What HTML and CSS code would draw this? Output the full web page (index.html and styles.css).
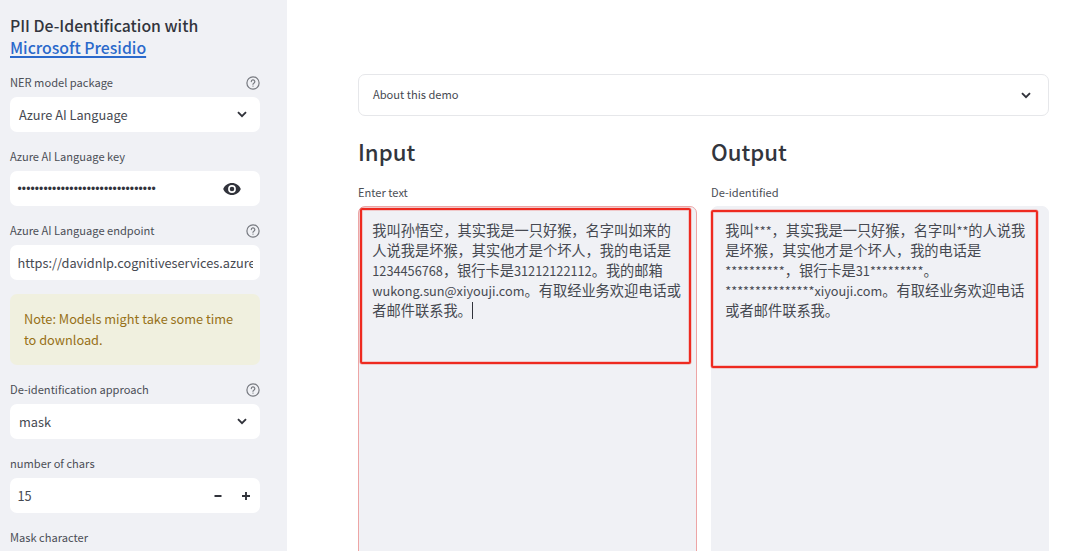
FILE: index.html
```html
<!DOCTYPE html>
<html lang="zh-CN">
<head>
<meta charset="utf-8">
<title>PII De-Identification</title>
<link rel="stylesheet" href="styles.css">
</head>
<body>
<svg class="defs" width="0" height="0" aria-hidden="true">
  <symbol id="help" viewBox="0 0 14 14">
    <circle cx="7" cy="7" r="6.100" fill="none" stroke="currentColor" stroke-width="1.2"/>
    <path d="M5.3 5.6a1.75 1.75 0 1 1 2.5 1.6c-.6.3-.8.6-.8 1.1" fill="none" stroke="currentColor" stroke-width="1.2" stroke-linecap="round"/>
    <circle cx="7" cy="10.1" r=".7" fill="currentColor"/>
  </symbol>
  <symbol id="chevron" viewBox="0 0 10 7">
    <path d="M1 1.2 5 5.2 9 1.2" fill="none" stroke="currentColor" stroke-width="1.9"/>
  </symbol>
</svg>
<div class="app">
  <aside class="sidebar">
    <h2 class="brand"><span class="brand-line">PII De-Identification with</span><a class="brand-line brand-link">Microsoft Presidio</a></h2>
    <div class="field">
      <div class="label"><span>NER model package</span><svg class="help"><use href="#help"/></svg></div>
      <div class="control select"><span>Azure AI Language</span><svg class="chevron"><use href="#chevron"/></svg></div>
    </div>
    <div class="field">
      <div class="label"><span>Azure AI Language key</span></div>
      <div class="control"><span class="dots">••••••••••••••••••••••••••••••••</span>
        <svg class="eye" viewBox="0 0 18 12"><path fill="currentColor" fill-rule="evenodd" d="M9 0C5 0 1.6 2.400 .2 6 1.600 9.600 5 12 9 12s7.400-2.400 8.800-6C16.400 2.400 13 0 9 0Zm0 9.900a3.900 3.900 0 1 1 0-7.800 3.900 3.900 0 0 1 0 7.800Zm0-1.600a2.300 2.300 0 1 0 0-4.600 2.300 2.300 0 0 0 0 4.600Z"/></svg>
      </div>
    </div>
    <div class="field">
      <div class="label"><span>Azure AI Language endpoint</span><svg class="help"><use href="#help"/></svg></div>
      <div class="control"><span class="url">https://davidnlp.cognitiveservices.azure</span></div>
    </div>
    <div class="note"><div>Note: Models might take some time</div><div>to download.</div></div>
    <div class="field">
      <div class="label"><span>De-identification approach</span><svg class="help"><use href="#help"/></svg></div>
      <div class="control select"><span>mask</span><svg class="chevron"><use href="#chevron"/></svg></div>
    </div>
    <div class="field">
      <div class="label"><span>number of chars</span></div>
      <div class="control"><span class="grow">15</span>
        <svg class="step" viewBox="0 0 8 8"><path d="M.5 4h7" stroke="currentColor" stroke-width="1.9"/></svg>
        <svg class="step plus" viewBox="0 0 8 8"><path d="M0 4h8M4 0v8" stroke="currentColor" stroke-width="1.9"/></svg>
      </div>
    </div>
    <div class="field"><div class="label"><span>Mask character</span></div></div>
  </aside>
  <main class="main">
    <div class="expander"><span>About this demo</span><svg class="chevron"><use href="#chevron"/></svg></div>
    <div class="columns">
      <section class="column">
        <h1 class="title">Input</h1>
        <div class="label area-label"><span>Enter text</span></div>
        <div class="area focused">
          <div class="frame frame-input"></div>
          <div>我叫孙悟空，其实我是一只好猴，名字叫如来的</div>
          <div>人说我是坏猴，其实他才是个坏人，我的电话是</div>
          <div><span class="lat">1234456768</span>，银行卡是<span class="lat">31212122112</span>。我的邮箱</div>
          <div><span class="lat">wukong.sun@xiyouji.com</span>。有取经业务欢迎电话或</div>
          <div class="last">者邮件联系我。<span class="caret"></span></div>
        </div>
      </section>
      <section class="column">
        <h1 class="title">Output</h1>
        <div class="label area-label"><span>De-identified</span></div>
        <div class="area">
          <div class="frame frame-output"></div>
          <div>我叫<span class="lat">***</span>，其实我是一只好猴，名字叫<span class="lat">**</span>的人说我</div>
          <div>是坏猴，其实他才是个坏人，我的电话是</div>
          <div><span class="lat">**********</span>，银行卡是<span class="lat">31*********</span>。</div>
          <div><span class="lat">***************xiyouji.com</span>。有取经业务欢迎电话</div>
          <div>或者邮件联系我。</div>
        </div>
      </section>
    </div>
  </main>
</div>
</body>
</html>
```

FILE: styles.css
```css
* { box-sizing: border-box; }
body {
  margin: 0;
  background: #fff;
  color: #464951;
  font-family: "Noto Sans CJK SC", "Noto Sans", sans-serif;
  font-size: 12.75px;
}
.defs { position: absolute; }
.app { display: flex; height: 551px; overflow: hidden; }
.sidebar {
  width: 287px;
  flex: none;
  padding: 15px 27px 0 10px;
  background: #f0f1f5;
  overflow: hidden;
}
.brand {
  margin: 0 0 15px;
  height: 42px;
  font-size: 15.8px;
  line-height: 21px;
  font-weight: 500;
  color: #32353d;
  white-space: nowrap;
}
.brand-line { display: block; width: max-content; }
.brand-link { padding-top: 1px; color: #2b69cb; text-decoration: underline; text-decoration-thickness: 1.5px; text-underline-offset: 2px; }
.field { margin-bottom: 14px; }
.label {
  display: flex;
  align-items: center;
  justify-content: space-between;
  height: 21px;
  margin-bottom: 4px;
  font-size: 11.12px;
  line-height: 20px;
  color: #4b4e56;
}
.label > span { height: 21px; }
.area-label { line-height: 22px; }
.help { width: 14px; height: 14px; color: #777a80; }
.control {
  display: flex;
  align-items: center;
  height: 35px;
  padding: 0 7px 0 7.5px;
  background: #fff;
  border-radius: 7px;
  line-height: 20px;
  overflow: hidden;
  white-space: nowrap;
}
.select { justify-content: space-between; padding: 0 13px 0 9px; }
.chevron { width: 10px; height: 7px; color: #31333b; }
.dots { flex: 1; padding-top: 1px; font: 12px/20px "Liberation Sans", sans-serif; letter-spacing: .12px; color: #31333b; }
.eye { width: 18px; height: 12px; margin-right: 12px; color: #31333b; }
.url { flex: 1; min-width: 0; overflow: hidden; }
.grow { flex: 1; }
.step { width: 8px; height: 8px; margin-right: 20px; color: #31333b; }
.plus { margin-right: 3px; }
.note {
  height: 71px;
  margin-bottom: 14px;
  padding: 14px;
  border-radius: 7px;
  background: #f0f0df;
  color: #977117;
  line-height: 21px;
  white-space: nowrap;
}
.main { flex: 1; padding: 74px 31px 0 71px; }
.expander {
  display: flex;
  align-items: center;
  justify-content: space-between;
  height: 42px;
  padding: 0 17px 0 14px;
  border: 1px solid #e6e7ea;
  border-radius: 7px;
  font-size: 11.12px;
}
.expander span { padding-bottom: 2px; }
.columns { display: grid; grid-template-columns: 339px 338px; gap: 14px; }
.title {
  margin: 18px 0 13px;
  height: 34px;
  font-size: 22.2px;
  line-height: 34px;
  font-weight: 500;
  color: #32353d;
}
.area {
  position: relative;
  height: 380px;
  padding: 13px 13.3px;
  border: 1px solid #f0f1f5;
  border-radius: 7px;
  background: #f0f1f5;
  font-size: 14.22px;
  line-height: 20px;
  white-space: nowrap;
}
.area > div { height: 20px; }
.focused { border-color: #eda5a5; }
.lat { font-size: 12.72px; }
.area > .frame {
  position: absolute;
  border: 2px solid #ee2a20;
  border-radius: 2px;
  box-shadow: 0 0 0 .5px #ee2a2066, inset 0 0 0 .5px #ee2a2066;
}
.area > .frame-input { left: 1px; top: 1px; width: 331px; height: 156px; }
.area > .frame-output { left: -1px; top: 3px; width: 327px; height: 158px; }
.last { display: flex; align-items: center; }
.caret { width: 1px; height: 17px; background: #31333b; }
```
